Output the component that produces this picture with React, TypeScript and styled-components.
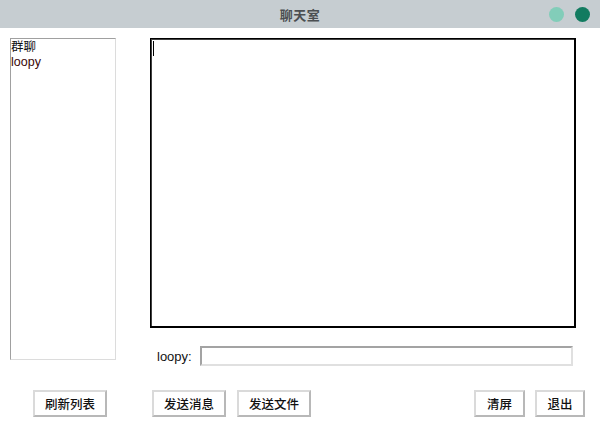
import React from "react";
import styled, { createGlobalStyle } from "styled-components";

const Global = createGlobalStyle`
  html, body { margin: 0; padding: 0; background: #ffffff; }
  body { font-family: "Liberation Sans", "Noto Sans CJK SC", sans-serif; }
  * { box-sizing: border-box; }
`;

const Window = styled.div`
  width: 600px;
  height: 428px;
  background: #ffffff;
  display: flex;
  flex-direction: column;
  overflow: hidden;
`;

const TitleBar = styled.div`
  height: 28px;
  background: #c6cdd1;
  display: grid;
  grid-template-columns: 1fr auto 1fr;
  align-items: center;
`;

const Title = styled.div`
  grid-column: 2;
  font-family: "Noto Sans CJK SC", sans-serif;
  font-weight: 700;
  font-size: 13px;
  color: #4b4f52;
  letter-spacing: 0.5px;
`;

const Controls = styled.div`
  grid-column: 3;
  justify-self: end;
  display: flex;
  gap: 11px;
  padding-right: 10px;
`;

const Dot = styled.div<{ $color: string }>`
  width: 15px;
  height: 15px;
  border-radius: 50%;
  background: ${(p) => p.$color};
`;

const Content = styled.div`
  display: grid;
  grid-template-columns: 106px 426px;
  column-gap: 34px;
  padding: 10px 0 0 10px;
`;

const ListBox = styled.div`
  height: 322px;
  border: 1px solid;
  border-color: #a0a0a0 #dcdcdc #dcdcdc #a0a0a0;
  display: flex;
  flex-direction: column;
  padding: 1px 0 0 0;
  font-size: 12.5px;
  line-height: 15px;
`;

const ListItem = styled.div<{ $color: string }>`
  color: ${(p) => p.$color};
  font-family: "Liberation Sans", "Noto Sans CJK SC", sans-serif;
`;

const RightCol = styled.div`
  display: flex;
  flex-direction: column;
`;

const TextArea = styled.div`
  height: 290px;
  border: 2px solid #000;
  border-top-width: 1px;
  border-left-width: 1px;
  box-shadow: inset 1px 1px 0 #404040;
  padding: 2px 0 0 2px;
`;

const Caret = styled.div`
  width: 1px;
  height: 15px;
  background: #000;
`;

const EntryRow = styled.div`
  display: flex;
  align-items: center;
  margin-top: 18px;
  height: 20px;
  padding: 0 3px 0 7px;
  gap: 8px;
`;

const Label = styled.span`
  font-size: 13px;
  color: #111;
`;

const Entry = styled.div`
  flex: 1;
  height: 20px;
  border: 2px solid;
  border-color: #a3a3a3 #e0e0e0 #e0e0e0 #a3a3a3;
`;

const ButtonRow = styled.div`
  display: flex;
  margin-top: 24px;
  padding-left: 33px;
`;

const Button = styled.button<{ $w: number; $ml: number }>`
  width: ${(p) => p.$w}px;
  height: 27px;
  margin-left: ${(p) => p.$ml}px;
  background: #ffffff;
  border: 2px solid;
  border-color: #dadada #b8b8b8 #b8b8b8 #dadada;
  font-family: "Noto Sans CJK SC", sans-serif;
  font-size: 12.5px;
  font-weight: 500;
  color: #111;
  padding: 0;
  display: flex;
  align-items: center;
  justify-content: center;
`;

export default function App() {
  return (
    <>
      <Global />
      <Window>
        <TitleBar>
          <Title>聊天室</Title>
          <Controls>
            <Dot $color="#82cdb9" />
            <Dot $color="#127b60" />
          </Controls>
        </TitleBar>
        <Content>
          <ListBox>
            <ListItem $color="#111">群聊</ListItem>
            <ListItem $color="#3a0808">loopy</ListItem>
          </ListBox>
          <RightCol>
            <TextArea>
              <Caret />
            </TextArea>
            <EntryRow>
              <Label>loopy:</Label>
              <Entry />
            </EntryRow>
          </RightCol>
        </Content>
        <ButtonRow>
          <Button $w={74} $ml={0}>刷新列表</Button>
          <Button $w={74} $ml={45}>发送消息</Button>
          <Button $w={74} $ml={11}>发送文件</Button>
          <Button $w={51} $ml={163}>清屏</Button>
          <Button $w={50} $ml={10}>退出</Button>
        </ButtonRow>
      </Window>
    </>
  );
}
